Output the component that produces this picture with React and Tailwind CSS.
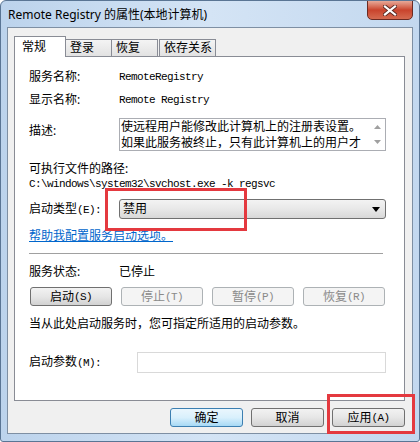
import React from "react";

const M = ({ children, className = "" }) => (
  <span className={"font-['Liberation_Mono',monospace] text-[11px] tracking-[-0.6px] " + className}>{children}</span>
);

const SmallBtn = ({ label, k, disabled }) => (
  <div
    className={
      "w-[82px] h-[19px] rounded-[3px] border flex items-center justify-center leading-[14px] " +
      (disabled
        ? "border-[#adb2b5] bg-[#f4f4f4] text-[#8a8a8a]"
        : "border-[#707070] bg-gradient-to-b from-[#f2f2f2] via-[#e6e6e6] to-[#d2d2d2] text-black")
    }
  >
    <span>{label}</span>
    <M>({k})</M>
  </div>
);

const BottomBtn = ({ children, primary }) => (
  <div
    className={
      "w-[73px] h-[19px] rounded-[3px] border flex items-center justify-center leading-[14px] text-black " +
      (primary
        ? "border-[#3c7fb1] bg-gradient-to-b from-[#eaf6fd] via-[#d9f0fc] to-[#a7d9f5]"
        : "border-[#707070] bg-gradient-to-b from-[#f2f2f2] via-[#e6e6e6] to-[#d2d2d2]")
    }
  >
    {children}
  </div>
);

export default function App() {
  return (
    <div className="relative w-[420px] h-[442px] flex flex-col border border-[#5a7594] rounded-t-[6px] rounded-b-[3px] bg-gradient-to-r from-[#bcd3ec] via-[#d4e4f5] to-[#c3d8ef] font-['Noto_Sans','Noto_Sans_CJK_SC',sans-serif] text-[12px] text-black overflow-hidden">
      {/* title bar */}
      <div className="h-[26px] flex items-start justify-between">
        <div className="pl-[7px] pt-[6px] leading-[16px] text-[12px] text-black whitespace-nowrap">
          Remote Registry 的属性(本地计算机)
        </div>
        <div className="mr-[6px] -mt-px w-[46px] h-[20px] rounded-b-[5px] border border-[#6b2a22] bg-gradient-to-b from-[#e6a898] via-[#c9432c] to-[#d56a50] flex items-center justify-center">
          <svg width="14" height="11" viewBox="0 0 14 11">
            <path d="M2 1.5 L12 9.5 M12 1.5 L2 9.5" stroke="#5a2a24" strokeWidth="4" strokeLinecap="square" />
            <path d="M2 1.5 L12 9.5 M12 1.5 L2 9.5" stroke="#ffffff" strokeWidth="2.2" strokeLinecap="square" />
          </svg>
        </div>
      </div>

      {/* client */}
      <div className="mx-[6px] mb-[7px] flex-1 border border-[#7e8fa3] bg-[#f0f0f0] pt-[8px] pl-[6px] pr-[8px] pb-[6px] flex flex-col">
        {/* tabs */}
        <div className="relative z-10 h-[20px] flex items-end">
          <div className="w-[52px] h-[21px] -mb-px bg-white border border-b-0 border-[#898c95] pl-[7px] pt-[2px] leading-[16px]">
            常规
          </div>
          <div className="-ml-px w-[47px] h-[17px] bg-gradient-to-b from-[#f4f4f4] to-[#e2e2e2] border border-b-0 border-[#898c95] pl-[4px] leading-[16px]">
            登录
          </div>
          <div className="-ml-px w-[47px] h-[17px] bg-gradient-to-b from-[#f4f4f4] to-[#e2e2e2] border border-b-0 border-[#898c95] pl-[4px] leading-[16px]">
            恢复
          </div>
          <div className="ml-px w-[57px] h-[17px] bg-gradient-to-b from-[#f4f4f4] to-[#e2e2e2] border border-b-0 border-[#898c95] pl-[4px] leading-[16px]">
            依存关系
          </div>
        </div>

        {/* panel */}
        <div className="w-[391px] h-[345px] bg-white border border-[#898c95] pl-[14px] flex flex-col">
          <div className="mt-[13px] h-[14px] leading-[14px] flex">
            <div className="w-[90px]">服务名称:</div>
            <M>RemoteRegistry</M>
          </div>
          <div className="mt-[9px] h-[14px] leading-[14px] flex">
            <div className="w-[90px]">显示名称:</div>
            <M>Remote Registry</M>
          </div>
          <div className="mt-[11px] flex">
            <div className="w-[90px] pt-[6px] leading-[14px]">描述:</div>
            <div className="w-[267px] h-[33px] border border-[#abadb3] bg-white flex">
              <div className="flex-1 pl-[1px] text-[12px] leading-[16px] whitespace-nowrap font-['Noto_Sans_CJK_SC',sans-serif]">
                <div className="-mt-px">使远程用户能修改此计算机上的注册表设置。</div>
                <div>如果此服务被终止，只有此计算机上的用户才</div>
              </div>
              <div className="w-[16px] flex flex-col items-center justify-between py-[6px]">
                <svg width="7" height="4" viewBox="0 0 7 4"><path d="M0 4 L3.5 0 L7 4 Z" fill="#a0a0a0" /></svg>
                <svg width="7" height="4" viewBox="0 0 7 4"><path d="M0 0 L3.5 4 L7 0 Z" fill="#a0a0a0" /></svg>
              </div>
            </div>
          </div>
          <div className="mt-[11px] h-[14px] leading-[14px]">可执行文件的路径:</div>
          <div className="h-[14px] leading-[14px]">
            <M>C:\windows\system32\svchost.exe -k regsvc</M>
          </div>
          <div className="mt-[9px] flex items-center">
            <div className="w-[90px] leading-[14px]">
              启动类型<M>(E):</M>
            </div>
            <div className="w-[267px] h-[20px] rounded-[3px] border border-[#707070] bg-gradient-to-b from-[#f3f3f3] via-[#e8e8e8] to-[#d8d8d8] flex items-center justify-between pl-[3px] pr-[5px]">
              <span className="leading-[14px]">禁用</span>
              <svg width="8" height="5" viewBox="0 0 8 5"><path d="M0 0 L8 0 L4 5 Z" fill="#000" /></svg>
            </div>
          </div>
          <div className="mt-[10px] h-[14px] leading-[14px]">
            <span className="text-[#0066cc] underline">帮助我配置服务启动选项。</span>
          </div>
          <div className="mt-[10px] w-[354px] border-t border-t-[#a0a0a0] border-b border-b-white h-[2px]" />
          <div className="mt-[10px] h-[14px] leading-[14px] flex">
            <div className="w-[90px]">服务状态:</div>
            <div>已停止</div>
          </div>
          <div className="mt-[8px] w-[356px] pl-px flex justify-between">
            <SmallBtn label="启动" k="S" />
            <SmallBtn label="停止" k="T" disabled />
            <SmallBtn label="暂停" k="P" disabled />
            <SmallBtn label="恢复" k="R" disabled />
          </div>
          <div className="mt-[11px] h-[14px] leading-[14px]">当从此处启动服务时，您可指定所适用的启动参数。</div>
          <div className="mt-[21px] flex items-center">
            <div className="w-[108px] leading-[14px]">
              启动参数<M>(M):</M>
            </div>
            <div className="w-[249px] h-[21px] border border-[#d9d9d9] bg-white" />
          </div>
        </div>

        {/* bottom buttons */}
        <div className="w-[391px] mt-[7px] flex justify-end gap-[8px]">
          <BottomBtn primary>确定</BottomBtn>
          <BottomBtn>取消</BottomBtn>
          <BottomBtn>
            应用<M>(A)</M>
          </BottomBtn>
        </div>
      </div>

      {/* red highlight boxes */}
      <div className="absolute left-[104px] top-[187px] w-[142px] h-[43px] border-[3px] border-[#e4393f] pointer-events-none" />
      <div className="absolute left-[326px] top-[393px] w-[88px] h-[40px] border-[3px] border-[#e4393f] pointer-events-none" />
    </div>
  );
}
